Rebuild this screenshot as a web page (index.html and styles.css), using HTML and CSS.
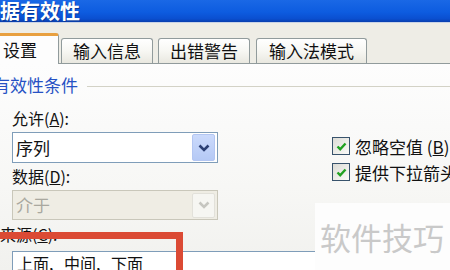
FILE: index.html
```html
<!DOCTYPE html>
<html lang="zh-CN">
<head>
<meta charset="utf-8">
<title>数据有效性</title>
<link rel="stylesheet" href="styles.css">
</head>
<body>
<div class="screen">
  <div class="titlebar"><span class="title">数据有效性</span></div>
  <div class="tabs">
    <div class="tab active">设置</div>
    <div class="tab">输入信息</div>
    <div class="tab">出错警告</div>
    <div class="tab last">输入法模式</div>
  </div>
  <div class="panel">
    <div class="legend"><span class="legend-text">有效性条件</span><span class="legend-line"></span></div>
    <div class="cond">
      <div class="left">
        <div class="label">允许(<u>A</u>):</div>
        <div class="combo">
          <span class="value">序列</span>
          <span class="drop"><svg width="12" height="8" viewBox="0 0 12 8"><path d="M1.5 1.5 L6 6 L10.5 1.5" fill="none" stroke="#2b3f74" stroke-width="2.6"/></svg></span>
        </div>
        <div class="label">数据(<u>D</u>):</div>
        <div class="combo disabled">
          <span class="value">介于</span>
          <span class="drop"><svg width="12" height="8" viewBox="0 0 12 8"><path d="M1.5 1.5 L6 6 L10.5 1.5" fill="none" stroke="#c6c6c0" stroke-width="2.6"/></svg></span>
        </div>
      </div>
      <div class="right">
        <div class="check"><span class="box"><svg width="13" height="13" viewBox="0 0 13 13"><path d="M2.5 6.5 L5.2 9.2 L10.5 3.5" fill="none" stroke="#21a121" stroke-width="2.4"/></svg></span>忽略空值 (<u>B</u>)</div>
        <div class="check"><span class="box"><svg width="13" height="13" viewBox="0 0 13 13"><path d="M2.5 6.5 L5.2 9.2 L10.5 3.5" fill="none" stroke="#21a121" stroke-width="2.4"/></svg></span>提供下拉箭头(<u>I</u>)</div>
      </div>
    </div>
    <div class="label src">来源(<u>C</u>):</div>
    <div class="source">上面, 中间, 下面</div>
  </div>
  <div class="highlight"></div>
  <div class="watermark">软件技巧</div>
</div>
</body>
</html>
```

FILE: styles.css
```css
html, body {
  margin: 0;
  padding: 0;
}
body {
  width: 450px;
  height: 270px;
  overflow: hidden;
  font-family: "Noto Sans CJK SC", "Noto Sans", sans-serif;
  color: #111;
}
.screen {
  position: relative;
  width: 450px;
  height: 270px;
  overflow: hidden;
  background: #eeede6;
}
.titlebar {
  height: 22px;
  background: linear-gradient(to bottom, #1a68e6 0%, #0d5ce0 55%, #0a4fd0 85%, #0a3fae 100%);
  border-bottom: 1px solid #c9d3e6;
}
.title {
  display: block;
  margin-left: -20px;
  font-size: 20px;
  line-height: 22px;
  font-weight: 700;
  color: #ffffff;
  white-space: nowrap;
  text-shadow: 1px 1px 0 #0a3a9a;
}
.tabs {
  display: flex;
  align-items: flex-end;
  height: 30px;
  margin-top: 10px;
  position: relative;
  z-index: 2;
}
.tab {
  flex: none;
  height: 24px;
  line-height: 24px;
  padding: 0 11px;
  margin-left: 5px;
  font-size: 17px;
  white-space: nowrap;
  border: 1px solid #919b9c;
  border-bottom: none;
  border-radius: 3px 3px 0 0;
  background: linear-gradient(to bottom, #ffffff 0%, #f7f7f3 50%, #e9e8e0 100%);
}
.tab.last {
  padding: 0 12px;
  margin-left: 6px;
}
.tab.active {
  height: 28px;
  line-height: 28px;
  margin-left: -12px;
  margin-bottom: -1px;
  padding: 0 21px 0 14px;
  border-top: 3px solid #e8a040;
  border-radius: 3px 3px 0 0;
  background: #fdfdfd;
}
.tab.active + .tab {
  margin-left: 2px;
}
.panel {
  height: 206px;
  border-top: 1px solid #919b9c;
  background: linear-gradient(to bottom, #fdfdfd 0%, #f7f7f5 60%, #f1f1ee 100%);
}
.legend {
  display: flex;
  align-items: center;
  margin-top: 11px;
  margin-left: -7px;
  height: 20px;
}
.legend-text {
  font-size: 17px;
  line-height: 20px;
  color: #2652c4;
  white-space: nowrap;
}
.legend-line {
  flex: 1;
  margin-left: 9px;
  margin-top: 2px;
  border-top: 1px solid #d3d2c6;
}
.cond {
  display: flex;
  margin-top: 13px;
}
.left {
  flex: none;
  width: 206px;
  margin-left: 12px;
}
.label {
  font-size: 16px;
  line-height: 20px;
  white-space: nowrap;
}
.combo {
  display: flex;
  align-items: center;
  justify-content: space-between;
  box-sizing: border-box;
  height: 31px;
  margin: 4px 0 3px;
  padding: 1px 2px 1px 2px;
  border: 1px solid #7f9db9;
  background: #ffffff;
}
.combo.disabled {
  height: 30px;
  margin: 4px 0 2px;
  border-color: #c9c7ba;
  background: #efede4;
}
.value {
  font-size: 17px;
  line-height: 24px;
  padding-left: 1px;
}
.disabled .value {
  color: #a9a89f;
}
.drop {
  display: flex;
  align-items: center;
  justify-content: center;
  box-sizing: border-box;
  width: 23px;
  height: 27px;
  border: 1px solid #b3c6f2;
  border-radius: 2px;
  background: linear-gradient(to bottom, #cbdafc, #b5c9f5);
}
.disabled .drop {
  height: 25px;
  border-color: #e2e1da;
  background: #f6f6f2;
}
.right {
  flex: none;
  margin-left: 114px;
  padding-top: 25px;
}
.check {
  display: flex;
  align-items: center;
  height: 26px;
  font-size: 17px;
  white-space: nowrap;
}
.box {
  display: flex;
  align-items: center;
  justify-content: center;
  box-sizing: border-box;
  width: 18px;
  height: 18px;
  margin-right: 5px;
  border: 1px solid #38536c;
  background: linear-gradient(135deg, #dcdcd6, #fbfbf8);
}
.src {
  margin-top: 2px;
}
.source {
  box-sizing: border-box;
  width: 430px;
  height: 30px;
  margin: 7px 0 0 12px;
  padding-left: 4px;
  border: 1px solid #7f9db9;
  background: #ffffff;
  font-size: 16px;
  line-height: 22px;
  word-spacing: 7px;
  white-space: nowrap;
}
.highlight {
  position: absolute;
  left: -10px;
  top: 232px;
  width: 186px;
  height: 60px;
  border-top: 7px solid #db4a34;
  border-right: 7px solid #db4a34;
}
.watermark {
  position: absolute;
  left: 315px;
  top: 203px;
  right: 0;
  bottom: 0;
  padding: 14px 0 0 5px;
  background: #fdfdfd;
  font-size: 31px;
  line-height: 40px;
  color: #c9c9c9;
  white-space: nowrap;
}
```
